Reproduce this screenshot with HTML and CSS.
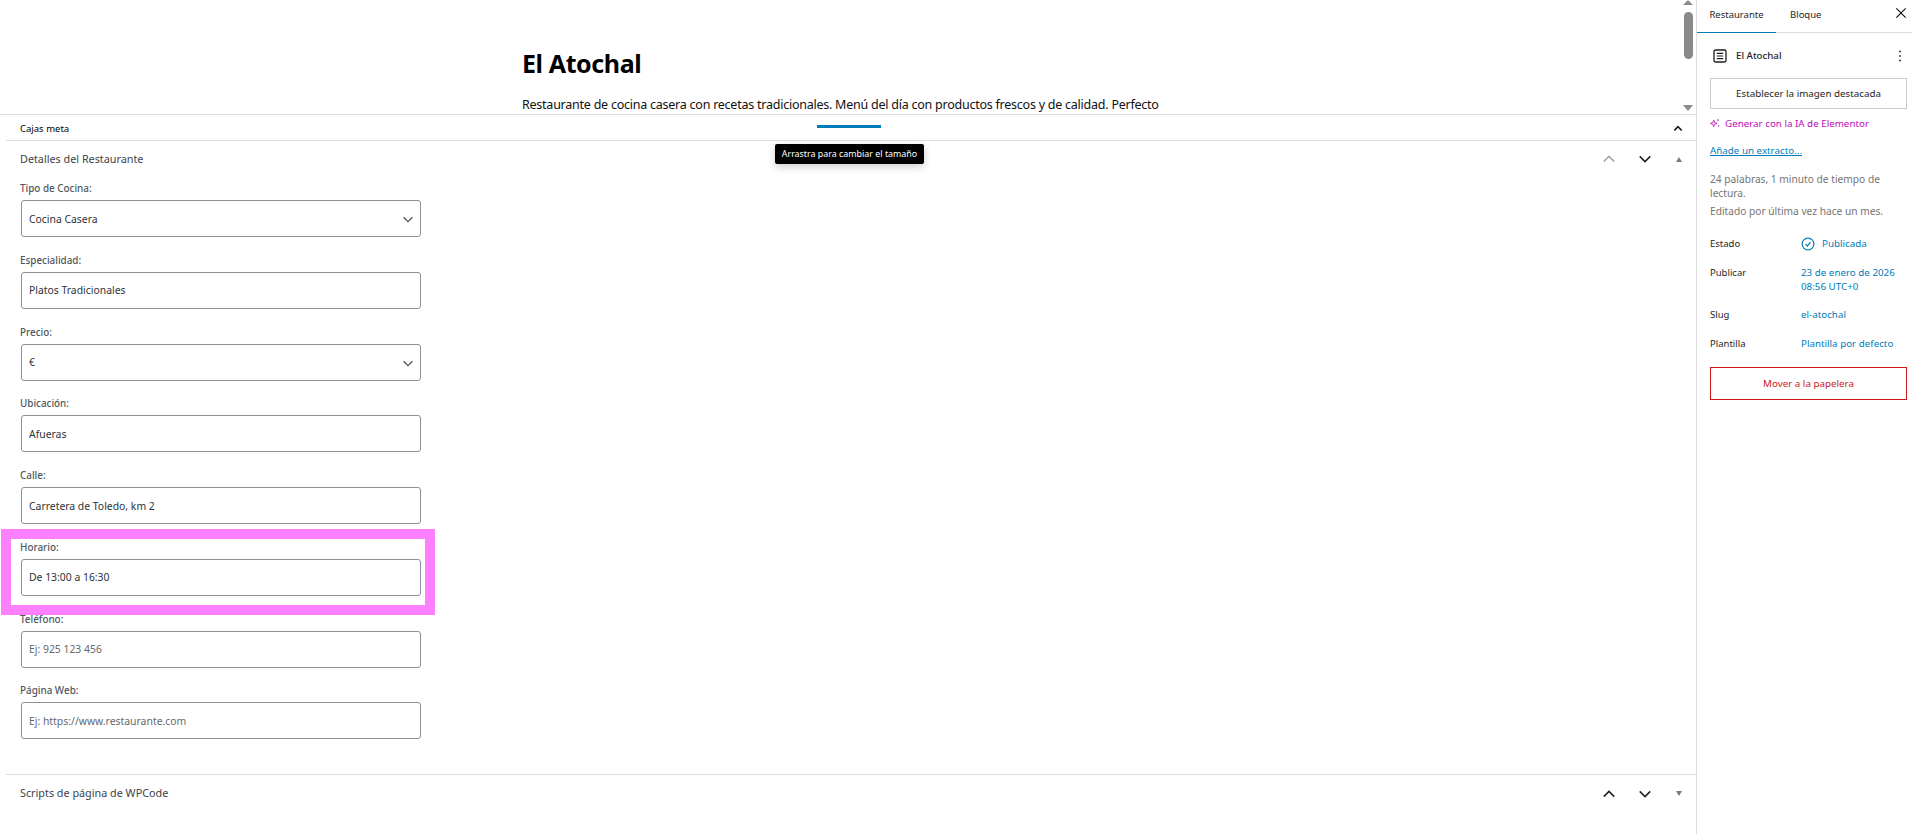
FILE: index.html
```html
<!DOCTYPE html>
<html lang="es">
<head>
    <meta charset="utf-8">
    <title>El Atochal</title>
    <link rel="stylesheet" href="styles.css">
</head>
<body>

<div class="app">
    <main class="main">
        <div class="canvas">
            <div class="canvas-inner">
                <h1 class="post-title">El Atochal</h1>
                <p class="post-text">Restaurante de cocina casera con recetas tradicionales. Menú del día con productos frescos y de calidad. Perfecto</p>
            </div>
            <div class="scrollbar">
                <span class="scroll-up"></span>
                <span class="scroll-thumb"></span>
                <span class="scroll-down"></span>
            </div>
        </div>

        <div class="meta-bar">
            <span class="meta-bar-title">Cajas meta</span>
            <svg class="icon-small" viewBox="0 0 24 24"><path d="M6.5 15.5 12 10l5.500 5.500" fill="none" stroke="#1e1e1e" stroke-width="2.500"/></svg>
            <span class="resize-handle"></span>
            <span class="tooltip">Arrastra para cambiar el tamaño</span>
        </div>

        <section class="panel">
            <div class="panel-head">
                <h2 class="panel-title">Detalles del Restaurante</h2>
                <div class="panel-actions">
                    <svg class="arrow" viewBox="0 0 16 16"><path d="M2 11 8 5l6 6" fill="none" stroke="#a7aaad" stroke-width="1.800"/></svg>
                    <svg class="arrow" viewBox="0 0 16 16"><path d="M2 5l6 6 6-6" fill="none" stroke="#1d2327" stroke-width="1.800"/></svg>
                    <span class="tri-up"></span>
                </div>
            </div>

            <div class="fields">
                <div class="field">
                    <label class="field-label">Tipo de Cocina:</label>
                    <div class="select-wrap">
                        <select class="field-input"><option>Cocina Casera</option></select>
                        <svg class="select-arrow" viewBox="0 0 16 16"><path d="M3 6l5 5 5-5" fill="none" stroke="#50575e" stroke-width="1.500"/></svg>
                    </div>
                </div>
                <div class="field">
                    <label class="field-label">Especialidad:</label>
                    <input class="field-input" type="text" value="Platos Tradicionales">
                </div>
                <div class="field">
                    <label class="field-label">Precio:</label>
                    <div class="select-wrap">
                        <select class="field-input"><option>€</option></select>
                        <svg class="select-arrow" viewBox="0 0 16 16"><path d="M3 6l5 5 5-5" fill="none" stroke="#50575e" stroke-width="1.500"/></svg>
                    </div>
                </div>
                <div class="field">
                    <label class="field-label">Ubicación:</label>
                    <input class="field-input" type="text" value="Afueras">
                </div>
                <div class="field">
                    <label class="field-label">Calle:</label>
                    <input class="field-input" type="text" value="Carretera de Toledo, km 2">
                </div>
                <div class="field">
                    <label class="field-label">Horario:</label>
                    <input class="field-input" type="text" value="De 13:00 a 16:30">
                </div>
                <div class="field">
                    <label class="field-label">Teléfono:</label>
                    <input class="field-input" type="text" placeholder="Ej: 925 123 456">
                </div>
                <div class="field">
                    <label class="field-label">Página Web:</label>
                    <input class="field-input" type="text" placeholder="Ej: https://www.restaurante.com">
                </div>
            </div>
        </section>

        <section class="panel panel-last">
            <div class="panel-head">
                <h2 class="panel-title">Scripts de página de WPCode</h2>
                <div class="panel-actions">
                    <svg class="arrow" viewBox="0 0 16 16"><path d="M2 11 8 5l6 6" fill="none" stroke="#1d2327" stroke-width="1.800"/></svg>
                    <svg class="arrow" viewBox="0 0 16 16"><path d="M2 5l6 6 6-6" fill="none" stroke="#1d2327" stroke-width="1.800"/></svg>
                    <span class="tri-down"></span>
                </div>
            </div>
        </section>

        <!-- marca rosa sobre el campo Horario -->
        <div class="highlight"></div>
    </main>

    <aside class="sidebar">
        <div class="tabs">
            <span class="tab tab-active">Restaurante</span>
            <span class="tab">Bloque</span>
            <svg class="tab-close" viewBox="0 0 24 24"><path d="m13.06 12 6.47-6.47-1.06-1.06L12 10.94 5.53 4.47 4.47 5.53 10.94 12l-6.47 6.47 1.06 1.06L12 13.06l6.470 6.470 1.060-1.060L13.060 12Z"/></svg>
        </div>

        <div class="side-body">
            <div class="post-row">
                <svg class="post-icon" viewBox="0 0 14 14"><rect x="1" y="1" width="12" height="12" rx="1.500" fill="none" stroke="#1e1e1e" stroke-width="1.300"/><path d="M3.800 4.300h6.400M3.800 7h6.400M3.800 9.700h6.400" stroke="#1e1e1e" stroke-width="1.200"/></svg>
                <span class="post-name">El Atochal</span>
                <svg class="kebab" viewBox="0 0 24 24"><path d="M13 19h-2v-2h2v2zm0-6h-2v-2h2v2zm0-6h-2V5h2v2z"/></svg>
            </div>

            <button class="side-button">Establecer la imagen destacada</button>

            <div class="ai-link">
                <svg class="ai-icon" viewBox="0 0 12 12"><path d="M4.500 2.500 5.500 5.500 8.500 6.500 5.500 7.500 4.500 10.500 3.500 7.500 0.500 6.500 3.500 5.500Z" fill="none" stroke="#c00bb9" stroke-width="1"/><circle cx="9.500" cy="2.500" r="1" fill="#c00bb9"/><circle cx="10.500" cy="9.500" r=".8" fill="#c00bb9"/></svg>
                <span>Generar con la IA de Elementor</span>
            </div>

            <a class="excerpt-link">Añade un extracto...</a>

            <p class="side-note">24 palabras, 1 minuto de tiempo de lectura.</p>
            <p class="side-note side-note-last">Editado por última vez hace un mes.</p>

            <div class="info">
                <span class="info-key">Estado</span>
                <span class="info-value info-status">
                    <svg class="status-icon" viewBox="0 0 14 14"><circle cx="7" cy="7" r="5.900" fill="none" stroke="#0a7cba" stroke-width="1.200"/><path d="M4.500 7.200 6.300 9l3.200-3.800" fill="none" stroke="#0a7cba" stroke-width="1.200"/></svg>
                    Publicada
                </span>
                <span class="info-key">Publicar</span>
                <span class="info-value">23 de enero de 2026<br>08:56 UTC+0</span>
                <span class="info-key">Slug</span>
                <span class="info-value">el-atochal</span>
                <span class="info-key">Plantilla</span>
                <span class="info-value">Plantilla por defecto</span>
            </div>

            <button class="side-button trash-button">Mover a la papelera</button>
        </div>
    </aside>
</div>

</body>
</html>
```

FILE: styles.css
```css
* {
    box-sizing: border-box;
}
html, body {
    height: 100%;
    margin: 0;
    overflow: hidden;
}
body {
    font-family: "Noto Sans", sans-serif;
    font-size: 10px;
    color: #1e1e1e;
    background-color: #fff;
}
.app {
    display: flex;
    height: 834px;
}

/* main column */
.main {
    position: relative;
    flex: 1;
    min-width: 0;
    padding-left: 6px;
}
.canvas {
    display: flex;
    height: 115px;
    margin-left: -6px;
    border-bottom: 1px solid #dcdcde;
    overflow: hidden;
}
.canvas-inner {
    flex: 1;
    padding: 46px 0 0 522px;
}
.post-title {
    margin: 0;
    font-size: 25px;
    line-height: 34px;
    letter-spacing: -0.4px;
    font-weight: 700;
    color: #000;
}
.post-text {
    margin: 15px 0 0;
    font-size: 12.500px;
    line-height: 20px;
    letter-spacing: -0.24px;
    white-space: nowrap;
    color: #111;
}
.scrollbar {
    display: flex;
    flex-direction: column;
    align-items: center;
    justify-content: space-between;
    width: 14px;
    margin-right: 1px;
    padding-bottom: 3px;
}
.scroll-up {
    width: 0;
    height: 0;
    border-left: 5px solid transparent;
    border-right: 5px solid transparent;
    border-bottom: 5px solid #8a8a8a;
}
.scroll-thumb {
    width: 9px;
    height: 47px;
    margin-bottom: auto;
    margin-top: 7px;
    border-radius: 5px;
    background-color: #8a8a8a;
}
.scroll-down {
    width: 0;
    height: 0;
    border-left: 5px solid transparent;
    border-right: 5px solid transparent;
    border-top: 6px solid #8a8a8a;
}

.meta-bar {
    position: relative;
    display: flex;
    align-items: center;
    justify-content: space-between;
    height: 26px;
    padding: 0 10px 0 14px;
    border-bottom: 1px solid #dcdcde;
}
.meta-bar-title {
    padding-top: 1px;
    font-size: 9.500px;
    font-weight: 400;
    color: #000;
}
.icon-small {
    width: 16px;
    height: 16px;
}
.resize-handle {
    position: absolute;
    left: 811px;
    top: 10px;
    width: 64px;
    height: 3px;
    background-color: #007cba;
}
.tooltip {
    position: absolute;
    left: 769px;
    top: 29px;
    z-index: 2;
    width: 149px;
    height: 20px;
    font-size: 8.900px;
    line-height: 20px;
    text-align: center;
    white-space: nowrap;
    color: #fff;
    background-color: #000;
    border-radius: 2px;
    box-shadow: 0 3px 8px rgba(0, 0, 0, 0.2);
}

.panel {
    border-bottom: 1px solid #dcdcde;
    height: 634px;
}
.panel-last {
    height: auto;
    border-bottom: none;
}
.panel-head {
    display: flex;
    align-items: center;
    justify-content: space-between;
    height: 36px;
    padding: 0 14px;
}
.panel-last .panel-head {
    height: 37px;
}
.panel-title {
    margin: 0 0 2px;
    font-size: 10.800px;
    font-weight: 400;
    color: #3c434a;
}
.panel-actions {
    display: flex;
    align-items: center;
    gap: 22px;
}
.arrow {
    width: 14px;
    height: 14px;
}
.tri-up, .tri-down {
    width: 0;
    height: 0;
    margin-left: 2px;
    border-left: 3.500px solid transparent;
    border-right: 3.500px solid transparent;
}
.tri-up {
    border-bottom: 5px solid #787c82;
}
.tri-down {
    border-top: 5px solid #787c82;
}

.fields {
    display: flex;
    flex-direction: column;
    padding: 0 0 0 14px;
}
.field {
    display: flex;
    flex-direction: column;
    height: 71.750px;
    width: 401px;
}
.field-label {
    height: 23px;
    padding-top: 4px;
    font-size: 9.900px;
    line-height: 15px;
    font-weight: 500;
    color: #50575e;
}
.field-input {
    display: block;
    width: 400px;
    height: 37px;
    margin: 0 0 0 1px;
    padding: 0 7px;
    font-family: inherit;
    font-size: 10.400px;
    color: #2c3338;
    background-color: #fff;
    border: 1px solid #8c8f94;
    border-radius: 3px;
    outline: none;
    appearance: none;
}
.field-input::placeholder {
    color: #646970;
    opacity: 1;
}
.select-wrap {
    position: relative;
}
.select-arrow {
    position: absolute;
    right: 6px;
    top: 12px;
    width: 14px;
    height: 14px;
}

.highlight {
    position: absolute;
    left: 1px;
    top: 529px;
    width: 434px;
    height: 86px;
    border: 10px solid #ff80ff;
    pointer-events: none;
}

/* right sidebar */
.sidebar {
    width: 216px;
    border-left: 1px solid #dcdcde;
}
.tabs {
    display: flex;
    align-items: center;
    height: 33px;
    border-bottom: 1px solid #dcdcde;
}
.tab {
    display: flex;
    align-items: center;
    justify-content: center;
    height: 33px;
    padding: 0 14px 3px;
    font-size: 9.500px;
}
.tab-active {
    width: 79px;
    padding: 0 0 3px;
    border-bottom: 1px solid #007cba;
}
.tab-close {
    width: 16px;
    height: 16px;
    margin-left: auto;
    margin-right: 3px;
    margin-bottom: 6px;
}
.side-body {
    padding: 0 5px 0 13px;
}
.post-row {
    display: flex;
    align-items: center;
    height: 45px;
}
.post-icon {
    width: 14px;
    height: 14px;
    margin-left: 3px;
    margin-right: 9px;
}
.post-name {
    font-size: 9.700px;
    font-weight: 500;
}
.kebab {
    width: 18px;
    height: 18px;
    margin-left: auto;
    margin-right: -2px;
}
.side-button {
    display: block;
    width: 197px;
    height: 31px;
    padding: 0;
    font-family: inherit;
    font-size: 9.800px;
    color: #1e1e1e;
    background-color: #fff;
    border: 1px solid #ccc;
}
.ai-link {
    display: flex;
    align-items: center;
    gap: 5px;
    height: 16px;
    margin-top: 6px;
    color: #c00bb9;
    font-size: 9.800px;
}
.ai-icon {
    width: 10px;
    height: 10px;
}
.excerpt-link {
    display: block;
    margin-top: 12px;
    font-size: 9.800px;
    line-height: 16px;
    color: #007cba;
    text-decoration: underline;
}
.side-note {
    width: 190px;
    margin: 13px 0 0;
    font-size: 10.200px;
    line-height: 14px;
    color: #757575;
}
.side-note-last {
    margin-top: 4px;
}
.info {
    display: grid;
    grid-template-columns: 91px 1fr;
    row-gap: 14.500px;
    margin-top: 19px;
    font-size: 9.800px;
    line-height: 14px;
}
.info-key {
    font-size: 9.500px;
}
.info-value {
    color: #007cba;
}
.info-status {
    display: flex;
    align-items: center;
    gap: 7px;
}
.status-icon {
    width: 14px;
    height: 14px;
}
.trash-button {
    height: 33px;
    margin-top: 16px;
    color: #cc1818;
    border-color: #cc1818;
}
```
